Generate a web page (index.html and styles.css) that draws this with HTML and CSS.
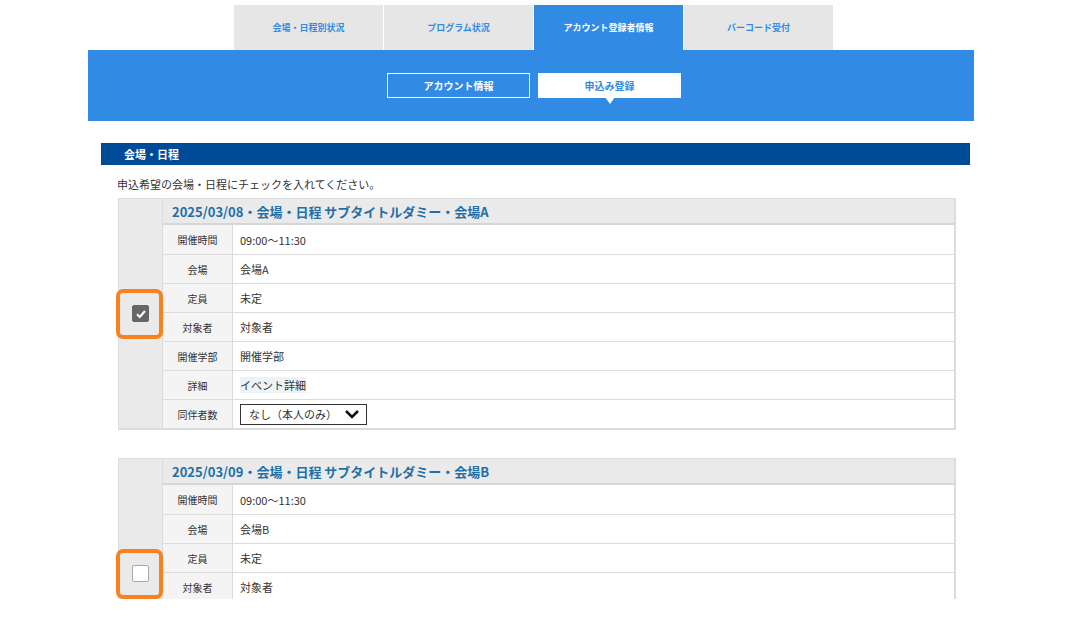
FILE: index.html
```html
<!DOCTYPE html>
<html lang="ja">
<head>
    <meta charset="UTF-8">
    <meta name="viewport" content="width=device-width, initial-scale=1.0">
    <title>申込み登録</title>
    <link rel="stylesheet" href="styles.css">
</head>
<body>
    <div class="page">
        <div class="wrap">
            <nav class="tabs">
                <a class="tab">会場・日程別状況</a>
                <a class="tab">プログラム状況</a>
                <a class="tab active">アカウント登録者情報</a>
                <a class="tab">バーコード受付</a>
            </nav>

            <div class="band">
                <a class="sub-btn">アカウント情報</a>
                <a class="sub-btn current">申込み登録</a>
            </div>

            <section class="section">
                <h2 class="section-title">会場・日程</h2>
                <p class="lead">申込希望の会場・日程にチェックを入れてください。</p>

                <div class="event">
                    <div class="event-check">
                        <span class="checkbox checked">
                            <svg width="12" height="12" viewBox="0 0 12 12"><path d="M2 6.3 L4.8 9 L10 3" fill="none" stroke="#fff" stroke-width="2"/></svg>
                        </span>
                        <span class="mark"></span>
                    </div>
                    <div class="event-body">
                        <div class="event-title">2025/03/08・会場・日程 サブタイトルダミー・会場A</div>
                        <div class="row"><div class="label">開催時間</div><div class="value">09:00～11:30</div></div>
                        <div class="row"><div class="label">会場</div><div class="value">会場A</div></div>
                        <div class="row"><div class="label">定員</div><div class="value">未定</div></div>
                        <div class="row"><div class="label">対象者</div><div class="value">対象者</div></div>
                        <div class="row"><div class="label">開催学部</div><div class="value">開催学部</div></div>
                        <div class="row"><div class="label">詳細</div><div class="value"><span class="hl">イベント詳細</span></div></div>
                        <div class="row"><div class="label">同伴者数</div>
                            <div class="value">
                                <div class="select">
                                    <span>なし（本人のみ）</span>
                                    <svg width="16" height="10" viewBox="0 0 16 10"><path d="M2 2 L8 8 L14 2" fill="none" stroke="#111" stroke-width="2.6"/></svg>
                                </div>
                            </div>
                        </div>
                    </div>
                </div>

                <div class="event">
                    <div class="event-check">
                        <span class="checkbox"></span>
                        <span class="mark"></span>
                    </div>
                    <div class="event-body">
                        <div class="event-title">2025/03/09・会場・日程 サブタイトルダミー・会場B</div>
                        <div class="row"><div class="label">開催時間</div><div class="value">09:00～11:30</div></div>
                        <div class="row"><div class="label">会場</div><div class="value">会場B</div></div>
                        <div class="row"><div class="label">定員</div><div class="value">未定</div></div>
                        <div class="row"><div class="label">対象者</div><div class="value">対象者</div></div>
                        <!-- remaining rows continue below the fold -->
                        <div class="row-rest"></div>
                    </div>
                </div>
            </section>
        </div>
    </div>
</body>
</html>
```

FILE: styles.css
```css
:root {
    --blue: #318be4;
    --navy: #004b97;
    --link: #1f6fa8;
    --tab-bg: #e6e6e6;
    --line: #dcdcdc;
    --head-bg: #eaeaea;
    --label-bg: #f4f4f4;
    --text: #333333;
    --orange: #f7821e;
}

* {
    margin: 0;
    padding: 0;
    box-sizing: border-box;
}

body {
    font-family: 'Noto Sans CJK JP', 'Noto Sans', sans-serif;
    color: var(--text);
    background: #ffffff;
}

.page {
    height: 599px;
    overflow: hidden;
}

.wrap {
    width: 886px;
    margin-left: 88px;
}

/* top tabs */
.tabs {
    display: flex;
    gap: 1px;
    padding: 5px 0 0 146px;
}

.tab {
    width: 149px;
    height: 45px;
    background: var(--tab-bg);
    color: var(--blue);
    font-size: 9px;
    font-weight: 700;
    display: flex;
    align-items: center;
    justify-content: center;
}

.tab.active {
    background: var(--blue);
    color: #ffffff;
}

/* sub navigation */
.band {
    background: var(--blue);
    height: 71px;
    display: flex;
    gap: 8px;
    padding: 23px 0 0 299px;
}

.sub-btn {
    position: relative;
    width: 143px;
    height: 25px;
    border: 1px solid #ffffff;
    color: #ffffff;
    font-size: 10px;
    font-weight: 700;
    display: flex;
    align-items: center;
    justify-content: center;
}

.sub-btn.current {
    background: #ffffff;
    color: var(--blue);
}

.sub-btn.current::after {
    content: "";
    position: absolute;
    left: 50%;
    top: 100%;
    margin-left: -5px;
    border-left: 5px solid transparent;
    border-right: 5px solid transparent;
    border-top: 7px solid #ffffff;
}

/* section */
.section {
    padding-top: 22px;
}

.section-title {
    margin-left: 13px;
    width: 869px;
    height: 22px;
    background: var(--navy);
    color: #ffffff;
    font-size: 11px;
    font-weight: 700;
    line-height: 22px;
    padding-left: 23px;
}

.lead {
    font-size: 11px;
    line-height: 16px;
    padding: 11px 0 0 29px;
    height: 33px;
}

.event {
    display: flex;
    margin-left: 30px;
    width: 838px;
    border: 1px solid var(--line);
    border-bottom-width: 2px;
    border-right-width: 2px;
    margin-bottom: 28px;
}

.event-check {
    position: relative;
    width: 44px;
    background: var(--head-bg);
    border-right: 1px solid var(--line);
    display: flex;
    align-items: center;
    justify-content: center;
}

.checkbox {
    width: 17px;
    height: 17px;
    border: 1px solid #a9a9a9;
    border-radius: 2px;
    background: #ffffff;
    display: flex;
    align-items: center;
    justify-content: center;
}

.checkbox.checked {
    background: #666666;
    border-color: #666666;
}

.mark {
    position: absolute;
    left: -3px;
    top: 50%;
    margin-top: -25px;
    width: 47px;
    height: 50px;
    border: 4px solid var(--orange);
    border-radius: 7px;
}

.event-body {
    flex: 1;
}

.event-title {
    height: 26px;
    background: var(--head-bg);
    border-bottom: 2px solid #d6d6d6;
    color: var(--link);
    font-size: 13px;
    font-weight: 700;
    line-height: 25px;
    padding-left: 9px;
}

.row {
    display: flex;
    height: 29px;
    border-top: 1px solid var(--line);
}

.event-title + .row {
    border-top: none;
}

.row-rest {
    height: 87px;
    border-top: 1px solid var(--line);
}

.label {
    width: 70px;
    background: var(--label-bg);
    border-right: 1px solid var(--line);
    font-size: 10px;
    display: flex;
    align-items: center;
    justify-content: center;
}

.value {
    flex: 1;
    font-size: 11px;
    padding-left: 7px;
    display: flex;
    align-items: center;
}

.hl {
    background: #edf3f9;
}

.select {
    width: 127px;
    height: 21px;
    border: 1px solid #333333;
    display: flex;
    align-items: center;
    justify-content: space-between;
    padding: 0 6px 0 8px;
    font-size: 11px;
}
```
